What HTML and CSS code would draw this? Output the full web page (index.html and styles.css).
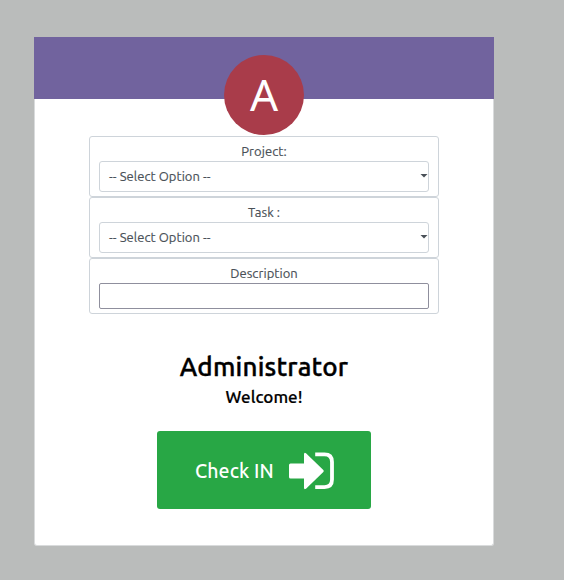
FILE: index.html
```html
<!DOCTYPE html>
<html lang="en">
<head>
<meta charset="utf-8">
<title>Check in</title>
<link rel="stylesheet" href="styles.css">
</head>
<body>
<main class="card">
  <header class="card-header"><div class="avatar">A</div></header>
  <div class="fields">
    <div class="field">
      <div class="label">Project:</div>
      <div class="select"><span>-- Select Option --</span><i class="caret"></i></div>
    </div>
    <div class="field">
      <div class="label">Task :</div>
      <div class="select"><span>-- Select Option --</span><i class="caret"></i></div>
    </div>
    <div class="field description">
      <div class="label">Description</div>
      <input class="input" type="text" aria-label="Description">
    </div>
  </div>
  <h1 class="name">Administrator</h1>
  <h2 class="welcome">Welcome!</h2>
  <button class="check-in" type="button">
    <span>Check IN</span>
    <svg class="icon" width="46" height="38" viewBox="0 0 46 38" aria-hidden="true">
      <path fill="#fff" d="M1.5 11.5H15V2.5Q15 0 17 1.3L34.3 18Q35.3 19 34.3 20L17 36.7Q15 38 15 35.5V26.5H1.5Q0 26.5 0 25V13Q0 11.5 1.5 11.5Z"/>
      <path fill="none" stroke="#fff" stroke-width="3.8" stroke-linejoin="round" d="M26.2 2.4H35.5Q43 2.4 43 9.9V27.6Q43 35.1 35.5 35.1H26.2"/>
    </svg>
  </button>
</main>
</body>
</html>
```
FILE: styles.css
```css
* { box-sizing: border-box; }
body {
  margin: 0;
  height: 580px;
  padding: 37px 0 0 34px;
  overflow: hidden;
  background: #babcbb;
  font-family: Ubuntu, "Noto Sans", sans-serif;
}
.card {
  display: flex;
  flex-direction: column;
  align-items: center;
  width: 460px;
  height: 509px;
  background: #fff;
  border: 1px solid #d9dbdc;
  border-top: 0;
  border-radius: 0 0 3px 3px;
}
.card-header {
  display: flex;
  justify-content: center;
  flex: none;
  width: 460px;
  height: 62px;
  padding-top: 18px;
  background: #71639e;
}
.avatar {
  flex: none;
  width: 80px;
  height: 80px;
  border-radius: 50%;
  background: #a93c4a;
  color: #fff;
  font-family: "Noto Sans", sans-serif;
  font-size: 44px;
  line-height: 79px;
  text-align: center;
}
.fields { width: 350px; margin-top: 37px; }
.field {
  height: 61px;
  padding: 5px 9px 0;
  border: 1px solid #ced4da;
  border-radius: 3px;
}
.description { height: 56px; }
.label {
  height: 19px;
  font-size: 13px;
  line-height: 19px;
  letter-spacing: 0.05px;
  color: #495057;
  -webkit-text-stroke: 0.15px #495057;
  text-align: center;
}
.select {
  display: flex;
  align-items: center;
  justify-content: space-between;
  height: 31px;
  padding-left: 9px;
  border: 1px solid #ced4da;
  border-radius: 3px;
  font-size: 13px;
  line-height: 19px;
  letter-spacing: 0.05px;
  color: #495057;
  -webkit-text-stroke: 0.15px #495057;
}
.caret {
  width: 8px;
  height: 4px;
  margin-top: -2px;
  background: #495057;
  clip-path: polygon(0 0, 100% 0, 50% 100%);
}
.input {
  display: block;
  width: 330px;
  height: 26px;
  border: 1px solid #8f8f9d;
  border-radius: 2px;
  background: #fff;
}
.name {
  margin: 35px 0 0;
  font-size: 26px;
  font-weight: 500;
  line-height: 36px;
  letter-spacing: 0.2px;
  color: #000;
  -webkit-text-stroke: 0.4px #000;
}
.welcome {
  margin: 2px 0 0;
  font-size: 17px;
  font-weight: 500;
  line-height: 20px;
  color: #000;
  -webkit-text-stroke: 0.2px #000;
}
.check-in {
  display: flex;
  align-items: center;
  width: 214px;
  height: 78px;
  margin-top: 24px;
  padding: 2px 0 0 38px;
  border: 0;
  border-radius: 3px;
  background: #28a745;
  color: #fff;
  font-family: inherit;
  font-size: 19.5px;
  font-weight: 500;
}
.check-in span { width: 94px; text-align: left; white-space: nowrap; letter-spacing: 0.1px; }
.icon { flex: none; }
```
